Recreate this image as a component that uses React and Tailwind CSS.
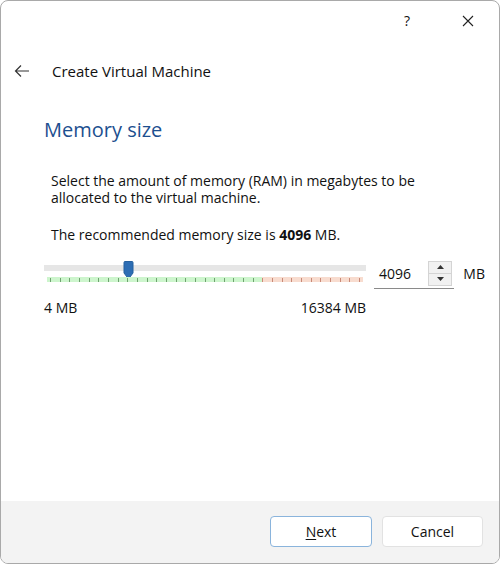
import React from "react";

const font = { fontFamily: '"Open Sans", "Noto Sans", "Liberation Sans", sans-serif' };

const Ticks = () => {
  const ticks = Array.from({ length: 33 });
  return (
    <div className="relative h-[5px] mt-[6px] mx-[3px]">
      <div className="absolute inset-y-0 left-0 w-[68%] bg-[#cdf5cd]" />
      <div className="absolute inset-y-0 right-0 w-[32%] bg-[#f8dccf]" />
      <div className="absolute inset-0 flex justify-between items-center px-[3px]">
        {ticks.map((_, i) => (
          <span
            key={i}
            className={
              "w-px h-[4px] " + (i < 22 ? "bg-[#6fa36f]" : "bg-[#c98a78]")
            }
          />
        ))}
      </div>
    </div>
  );
};

const Thumb = () => (
  <svg width="11" height="19" viewBox="0 0 11 19" className="absolute left-[79px] top-[-4px]">
    <path d="M1 1.5 Q1 0.5 2 0.5 H9 Q10 0.5 10 1.5 V12 L5.5 18 L1 12 Z" fill="#2d6db4" stroke="#25609f" strokeWidth="1" />
  </svg>
);

export default function App() {
  return (
    <div className="w-[500px] h-[564px] bg-white" style={font}>
      <div className="w-full h-full flex flex-col border border-[#a9a9a9] rounded-[8px] overflow-hidden bg-white text-[#111]">
        <div className="h-[40px] shrink-0 flex items-center justify-end pr-[25px] gap-[52px] text-[14px]">
          <span className="mt-[-2px]">?</span>
          <svg width="12" height="12" viewBox="0 0 12 12" stroke="#222" strokeWidth="1.1">
            <path d="M1 1 L11 11 M11 1 L1 11" />
          </svg>
        </div>
        <div className="flex items-center h-[60px] shrink-0 pl-[13px]">
          <svg width="16" height="14" viewBox="0 0 16 14" fill="none" stroke="#333" strokeWidth="1.2">
            <path d="M15 7 H1.5 M7 1.5 L1.5 7 L7 12.5" />
          </svg>
          <span className="ml-[22px] text-[15px]">Create Virtual Machine</span>
        </div>
        <div className="flex-1 pl-[43px] pr-[14px]">
          <div className="mt-[14px] text-[20px] text-[#1d4f8f]">Memory size</div>
          <div className="mt-[27px] ml-[7px] text-[14px] leading-[17px]">
            <div>Select the amount of memory (RAM) in megabytes to be</div>
            <div>allocated to the virtual machine.</div>
          </div>
          <p className="mt-[18px] ml-[7px] text-[14px]">
            The recommended memory size is <b>4096</b> MB.
          </p>
          <div className="flex mt-[13px]">
            <div className="w-[325px]">
              <div className="relative mt-[7px] h-[6px] bg-[#e6e6e6]">
                <Thumb />
              </div>
              <Ticks />
              <div className="flex justify-between mt-[15px] text-[14px]">
                <span>4 MB</span>
                <span>16384 MB</span>
              </div>
            </div>
            <div className="ml-[8px] w-[81px] h-[31px] flex items-center border-b border-[#8a8a8a] bg-white">
              <span className="ml-[5px] text-[14px] flex-1">4096</span>
              <div className="flex flex-col mr-[2px] w-[24px] h-[25px] border border-[#d4d4d4] bg-[#f1f1f1]">
                <div className="flex-1 flex items-center justify-center border-b border-[#d4d4d4]">
                  <svg width="7" height="4" viewBox="0 0 7 4"><path d="M0 4 L3.5 0 L7 4 Z" fill="#333" /></svg>
                </div>
                <div className="flex-1 flex items-center justify-center">
                  <svg width="7" height="4" viewBox="0 0 7 4"><path d="M0 0 L3.5 4 L7 0 Z" fill="#333" /></svg>
                </div>
              </div>
            </div>
            <span className="ml-[9px] mt-[5px] text-[14px]">MB</span>
          </div>
        </div>
        <div className="h-[62px] shrink-0 bg-[#f3f3f3] flex justify-end items-start pt-[15px] pr-[16px] gap-[10px] text-[14px]">
          <button className="w-[102px] h-[31px] bg-white border border-[#8ab4dc] rounded-[4px]">
            <span className="underline underline-offset-2">N</span>ext
          </button>
          <button className="w-[101px] h-[31px] bg-white border border-[#e2e2e2] rounded-[4px]">
            Cancel
          </button>
        </div>
      </div>
    </div>
  );
}
